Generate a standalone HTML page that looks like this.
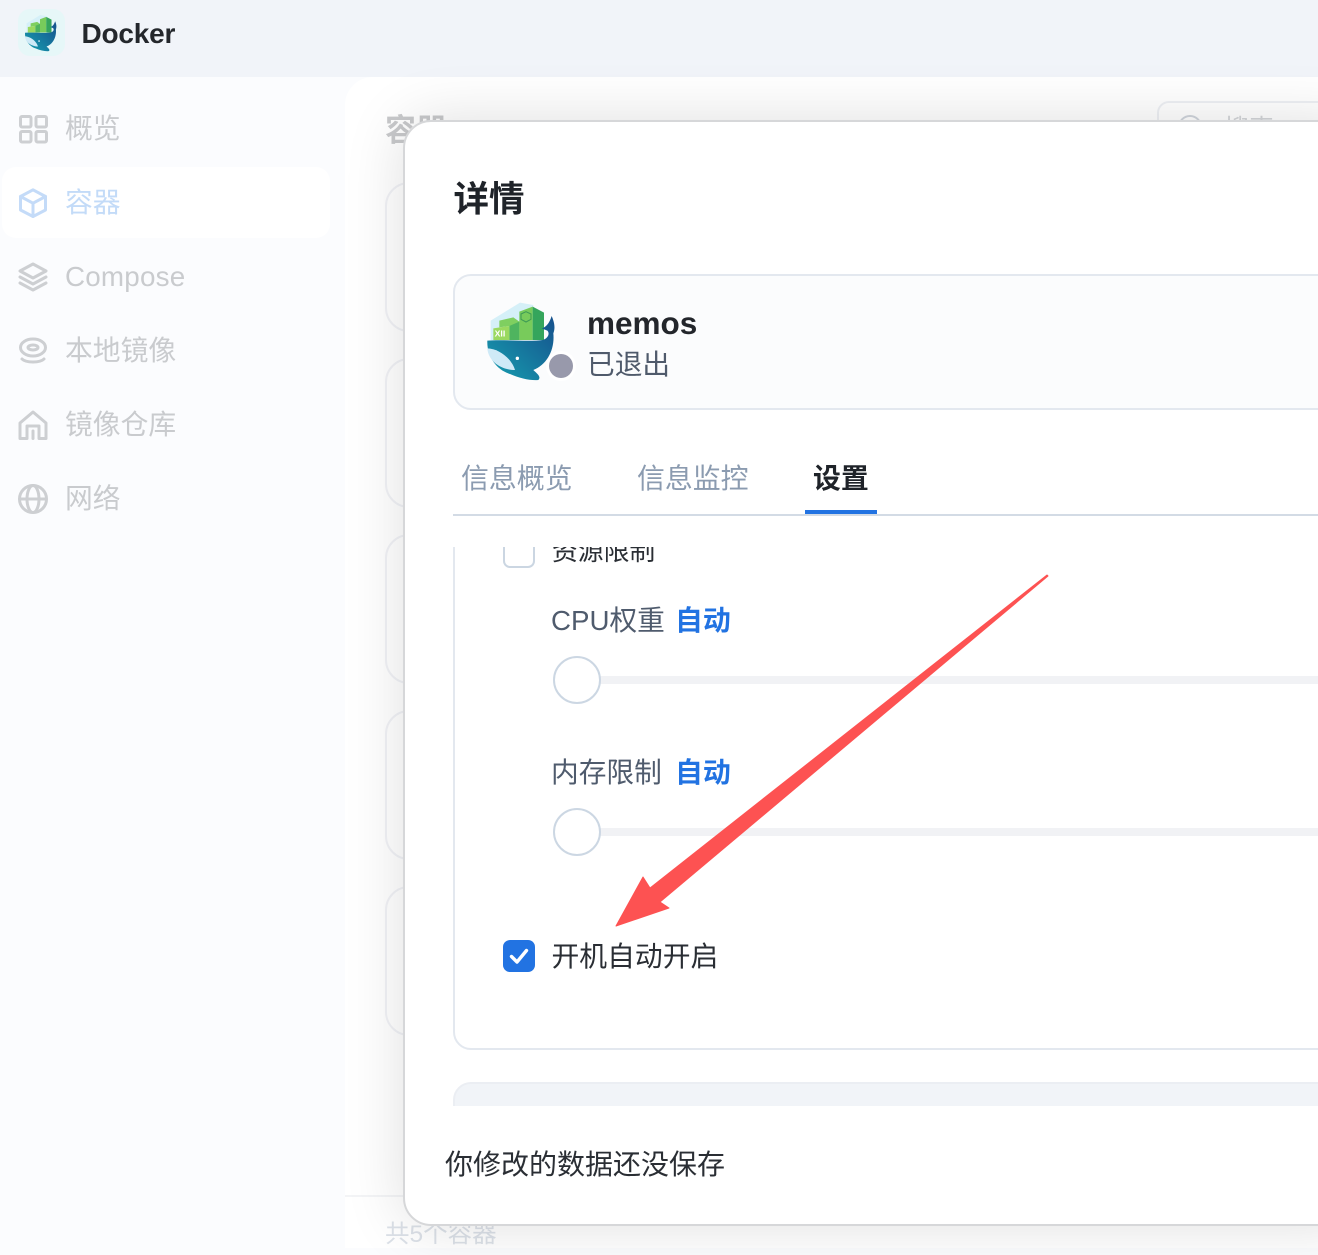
<!DOCTYPE html>
<html lang="zh">
<head>
<meta charset="utf-8">
<title>Docker</title>
<style>
html,body{margin:0;padding:0}
body{width:1318px;height:1248px;overflow:hidden;position:relative;background:#fbfcfe;font-family:"Liberation Sans","Noto Sans CJK SC",sans-serif;}
.a{position:absolute;white-space:nowrap}
.t{line-height:40px;height:40px}
.nav{font-size:27.8px;color:#c9cbce}
svg{position:absolute;overflow:visible}
.ic{fill:none;stroke:#cdcfd2;stroke-width:3;stroke-linecap:round;stroke-linejoin:round}
</style>
</head>
<body>
<!-- header -->
<div class="a" style="left:0;top:0;width:1318px;height:77px;background:#f1f4f9"></div>
<div class="a" style="left:18px;top:9px;width:47px;height:47px;border-radius:12px;background:#e6f7f8"></div>
<svg style="left:0;top:0" width="200" height="80" viewBox="0 0 600 240">
  <defs>
    <linearGradient id="wh" x1="1" y1="0" x2="0" y2="1"><stop offset="0" stop-color="#154f8c"/><stop offset="1" stop-color="#17a0b0"/></linearGradient>
    <g id="whale">
      <path d="M62 92 L150 38 L190 45 L190 150 L62 150Z" fill="#d5f0f8"/>
      <path d="M88 92 L130 82 L148 95 V150 H118 V108 L88 112Z" fill="#7fcf60"/>
      <path d="M118 108 L148 95 V150 H118Z" fill="#4fb45f"/>
      <path d="M70 115 L118 108 V150 H70Z" fill="#9ad95f"/>
      <path d="M148 65 L188 50 V150 H148Z" fill="#78cb5b"/>
      <path d="M188 50 L222 68 V150 H188Z" fill="#35a55c"/>
      <path d="M52 152 C100 148 180 156 218 150 C235 145 240 130 232 122 L215 115 C228 112 238 100 245 78 C250 90 258 110 250 130 C255 180 230 225 190 240 C200 250 215 260 205 270 C180 272 150 265 120 252 C80 240 50 200 52 152Z" fill="url(#wh)"/>
      <path d="M52 175 C85 175 125 205 135 240 C95 240 55 215 52 175Z" fill="#cfeaf7"/>
      <circle cx="142" cy="205" r="5" fill="#fff"/>
    </g>
  </defs>
  <use href="#whale" transform="translate(50.7 27.2) scale(.468)"/>
</svg>
<div class="a" style="left:81.5px;top:14px;font-size:28px;line-height:40px;font-weight:700;color:#24272c;letter-spacing:-.2px">Docker</div>

<!-- sidebar -->
<div class="a" style="left:2px;top:167px;width:328px;height:71px;border-radius:14px;background:#fff"></div>

<svg class="ic" style="left:18px;top:114px" width="30" height="30" viewBox="0 0 30 30"><rect x="2.5" y="2.5" width="10.5" height="10.5" rx="1.5"/><rect x="18" y="2.5" width="10.5" height="10.5" rx="1.5"/><rect x="2.5" y="17.5" width="10.5" height="10.5" rx="1.5"/><rect x="18" y="17.5" width="10.5" height="10.5" rx="1.5"/></svg>
<div class="a t nav" style="left:65px;top:109px">概览</div>

<svg class="ic" style="left:18px;top:188px;stroke:#c4dbf8" width="30" height="30" viewBox="0 0 30 30"><path d="M15 1.8 L27.5 8.5 V22 L15 28.5 L2.5 22 V8.5Z"/><path d="M2.5 8.5 L15 15.2 L27.5 8.5 M15 15.2 V28.5"/></svg>
<div class="a t nav" style="left:65px;top:183px;color:#c3dbf8">容器</div>

<svg class="ic" style="left:18px;top:262px" width="30" height="30" viewBox="0 0 30 30"><path d="M15 2 L28 9 L15 16 L2 9Z"/><path d="M2 15 L15 22 L28 15"/><path d="M2 21 L15 28 L28 21"/></svg>
<div class="a t nav" style="left:65px;top:257px;letter-spacing:.2px">Compose</div>

<svg class="ic" style="left:18px;top:336px" width="30" height="30" viewBox="0 0 30 30"><ellipse cx="15" cy="11.5" rx="12.5" ry="8.5"/><ellipse cx="15" cy="11.5" rx="5" ry="2.5"/><path d="M4 23 C8 27 22 27 26 23"/></svg>
<div class="a t nav" style="left:65px;top:331px">本地镜像</div>

<svg class="ic" style="left:18px;top:410px" width="30" height="30" viewBox="0 0 30 30"><path d="M2 28.5 V13 L15 2 L28 13 V28.5 H21 V16 H9 V28.5Z"/><path d="M15 21 V28.5"/></svg>
<div class="a t nav" style="left:65px;top:405px">镜像仓库</div>

<svg class="ic" style="left:18px;top:484px" width="30" height="30" viewBox="0 0 30 30"><circle cx="15" cy="15" r="13.5"/><ellipse cx="15" cy="15" rx="6" ry="13.5"/><path d="M2 15 H28"/></svg>
<div class="a t nav" style="left:65px;top:479px">网络</div>

<!-- background main panel -->
<div class="a" style="left:345px;top:77px;width:973px;height:1171px;background:#fff;border-top-left-radius:28px;overflow:hidden">
  <div class="a" style="left:40px;top:105px;width:1000px;height:150px;border:2px solid #f1f2f6;border-radius:24px;box-sizing:border-box"></div>
  <div class="a" style="left:40px;top:281px;width:1000px;height:150px;border:2px solid #f1f2f6;border-radius:24px;box-sizing:border-box"></div>
  <div class="a" style="left:40px;top:457px;width:1000px;height:150px;border:2px solid #f1f2f6;border-radius:24px;box-sizing:border-box"></div>
  <div class="a" style="left:40px;top:633px;width:1000px;height:150px;border:2px solid #f1f2f6;border-radius:24px;box-sizing:border-box"></div>
  <div class="a" style="left:40px;top:809px;width:1000px;height:150px;border:2px solid #f1f2f6;border-radius:24px;box-sizing:border-box"></div>
  <div class="a" style="left:0;top:1118px;width:973px;height:2px;background:#f3f4f6"></div>
  <div class="a" style="left:812px;top:24px;width:300px;height:60px;border:2px solid #eef0f4;border-radius:12px;box-sizing:border-box"></div>
  <div class="a" style="left:833px;top:38px;width:20px;height:20px;border:2px solid #d0d5dc;border-radius:50%"></div>
  <div class="a" style="left:879px;top:32px;font-size:25px;line-height:40px;color:#d4d6d9">搜索</div>
</div>
<div class="a" style="left:385px;top:111px;font-size:31px;line-height:40px;font-weight:700;color:#c8c9cb">容器</div>
<div class="a" style="left:385px;top:1215px;font-size:24.5px;line-height:40px;color:#dce1e8">共5个容器</div>

<!-- modal -->
<div class="a" style="left:403px;top:120px;width:960px;height:1106px;background:#fff;border:2px solid #d6d7d9;border-radius:28px;box-sizing:border-box;box-shadow:0 0 60px rgba(0,0,0,.13)"></div>
<div class="a" style="left:453.5px;top:176px;font-size:35.5px;line-height:46px;font-weight:700;color:#1f2329">详情</div>

<!-- info card -->
<div class="a" style="left:453px;top:274px;width:900px;height:136px;background:#fbfcfd;border:2px solid #e3e8ef;border-radius:18px;box-sizing:border-box"></div>
<svg style="left:470px;top:290px" width="120" height="100" viewBox="0 0 360 300">
  <use href="#whale"/>
  <text x="74" y="140" font-family="Liberation Sans" font-size="26" font-weight="700" fill="#fff">XII</text>
  <path d="M168 65 L183 72 V88 L168 96 L153 88 V72Z" fill="none" stroke="#3d9a55" stroke-width="3"/>
</svg>
<div class="a" style="left:546px;top:351px;width:30px;height:30px;border-radius:50%;background:#fff"></div>
<div class="a" style="left:549px;top:354px;width:24px;height:24px;border-radius:50%;background:#9899ab"></div>
<div class="a" style="left:587px;top:303px;font-size:31.5px;line-height:40px;font-weight:700;color:#23262b">memos</div>
<div class="a" style="left:587px;top:345px;font-size:27.7px;line-height:40px;color:#4f5a6b">已退出</div>

<!-- tabs -->
<div class="a" style="left:453px;top:514px;width:900px;height:2px;background:#d3dbe5"></div>
<div class="a" style="left:461px;top:459px;font-size:27.9px;line-height:40px;color:#8b9bb0">信息概览</div>
<div class="a" style="left:637px;top:459px;font-size:27.9px;line-height:40px;color:#8b9bb0">信息监控</div>
<div class="a" style="left:813px;top:459px;font-size:27.9px;line-height:40px;font-weight:700;color:#1f2329">设置</div>
<div class="a" style="left:805px;top:510px;width:72px;height:4px;background:#2273e2"></div>

<!-- settings scroll clip -->
<div class="a" style="left:404px;top:547px;width:914px;height:559px;overflow:hidden">
  <div class="a" style="left:49px;top:-100px;width:900px;height:603px;border:2px solid #e3e8ef;border-radius:18px;box-sizing:border-box"></div>
  <div class="a" style="left:99px;top:-12px;width:32px;height:33px;border:2px solid #cbd6e2;border-radius:7px;box-sizing:border-box"></div>
  <div class="a" style="left:148px;top:-15px;font-size:25.8px;line-height:40px;color:#2a2e34">资源限制</div>
  <div class="a" style="left:147px;top:54px;font-size:27.7px;line-height:40px;color:#4f5b6d">CPU权重</div>
  <div class="a" style="left:273px;top:54px;font-size:27.9px;line-height:40px;font-weight:700;color:#2273e2;margin-left:-2px">自动</div>
  <div class="a" style="left:190px;top:129px;width:730px;height:8px;background:#f1f2f5"></div>
  <div class="a" style="left:149px;top:109px;width:48px;height:48px;border:2px solid #ccd7e3;border-radius:50%;box-sizing:border-box;background:#fff"></div>
  <div class="a" style="left:147px;top:206px;font-size:27.7px;line-height:40px;color:#4f5b6d">内存限制</div>
  <div class="a" style="left:273px;top:206px;font-size:27.9px;line-height:40px;font-weight:700;color:#2273e2;margin-left:-2px">自动</div>
  <div class="a" style="left:190px;top:281px;width:730px;height:8px;background:#f1f2f5"></div>
  <div class="a" style="left:149px;top:261px;width:48px;height:48px;border:2px solid #ccd7e3;border-radius:50%;box-sizing:border-box;background:#fff"></div>
  <div class="a" style="left:99px;top:393px;width:32px;height:32px;border-radius:7px;background:#2273e2"></div>
  <svg style="left:99px;top:393px" width="32" height="32" viewBox="0 0 32 32"><path d="M8.5 16.5 L14 22 L23.5 10.5" fill="none" stroke="#fff" stroke-width="3.4" stroke-linecap="round" stroke-linejoin="round"/></svg>
  <div class="a" style="left:147.5px;top:390px;font-size:27.8px;line-height:40px;color:#2a2e34">开机自动开启</div>
  <div class="a" style="left:49px;top:535px;width:900px;height:60px;background:#f1f4f8;border:2px solid #ebeef3;border-radius:18px;box-sizing:border-box"></div>
</div>

<!-- footer -->
<div class="a" style="left:445px;top:1145px;font-size:28px;line-height:40px;color:#2a2e34">你修改的数据还没保存</div>

<!-- arrow -->
<svg style="left:0;top:0" width="1318" height="1248" viewBox="0 0 1318 1248">
  <path d="M1048 576 L660 902 L669 908 L616 926 L643 877 L650 888 L1047 575Z" fill="#fd5252" stroke="#fd5252" stroke-width="1" stroke-linejoin="round"/>
</svg>
</body>
</html>
